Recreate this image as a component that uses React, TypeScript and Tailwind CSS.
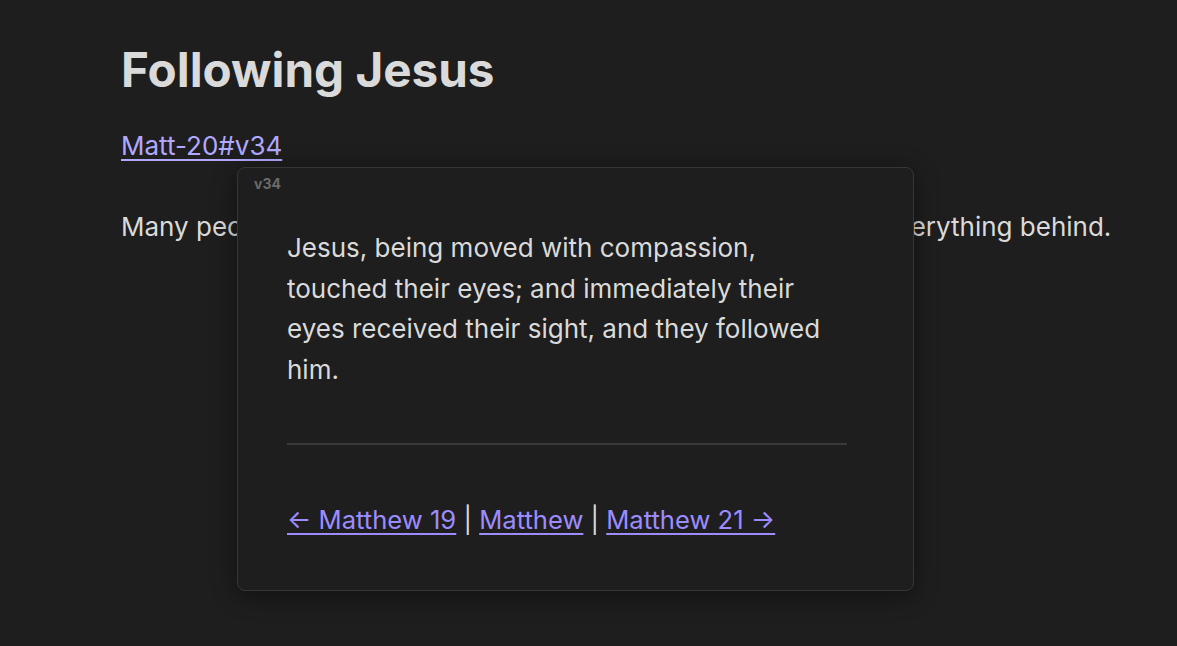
export default function App() {
  return (
    <div className="relative min-h-[646px] w-full bg-[#1e1e1e] font-['Inter',sans-serif] text-[#dadada]">
      <div className="pl-[121px] pr-[40px] pt-[40px]">
        <h1 className="text-[47.6px] font-bold leading-[60px] text-[#dadada]">Following Jesus</h1>
        <p className="mt-[26px] text-[26px] leading-[40px]">
          <a className="text-[#b1a9ff] underline underline-offset-[4px]" href="#">Matt-20#v34</a>
        </p>
        <p className="mt-[41px] text-[26px] leading-[40px]">
          Many people were healed by Jesus and followed him, leaving everything behind.
        </p>
      </div>

      {/* hover popover */}
      <div className="absolute left-[237px] top-[167px] h-[424px] w-[677px] rounded-[8px] border border-[#363636] bg-[#1e1e1e] shadow-[0_4px_24px_rgba(0,0,0,0.45)]">
        <div className="px-[16px] pt-[5px] text-[14px] font-bold text-[#6a6a6a]">v34</div>
        <div className="pl-[49px] pr-[66px] pt-[34px]">
          <p className="text-[26px] leading-[40.5px] text-[#dadada]">
            Jesus, being moved with compassion, touched their eyes; and immediately their eyes received their sight, and they followed him.
          </p>
          <div className="mt-[53px] h-[2px] bg-[#3a3a3a]" />
          <p className="mt-[55px] text-[25.6px] leading-[40px] text-[#dadada]">
            <a className="text-[#9c8cff] underline underline-offset-[4px]" href="#">← Matthew 19</a>
            {' | '}
            <a className="text-[#9c8cff] underline underline-offset-[4px]" href="#">Matthew</a>
            {' | '}
            <a className="text-[#9c8cff] underline underline-offset-[4px]" href="#">Matthew 21 →</a>
          </p>
        </div>
      </div>
    </div>
  );
}
